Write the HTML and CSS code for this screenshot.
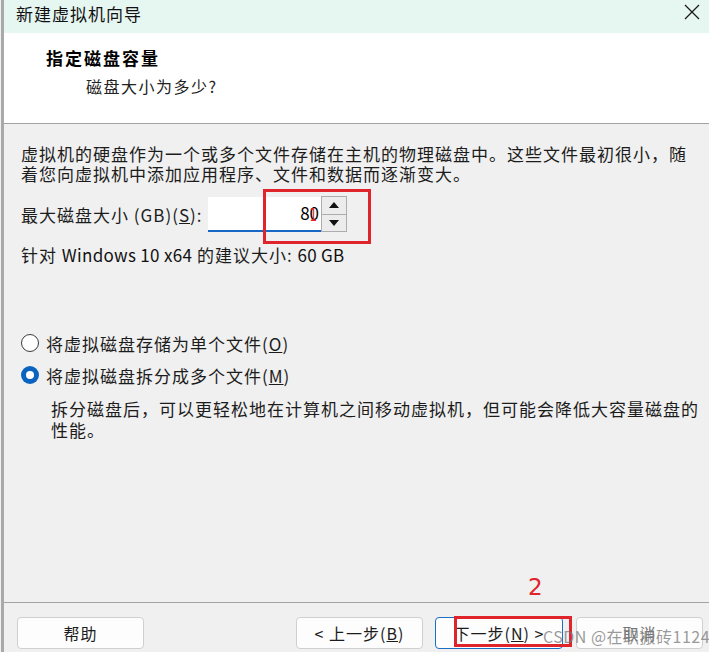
FILE: index.html
```html
<!DOCTYPE html>
<html lang="zh-CN">
<head>
<meta charset="utf-8">
<title>新建虚拟机向导</title>
<link rel="stylesheet" href="styles.css">
</head>
<body>
<div class="window">
  <div class="titlebar">
    <span class="title">新建虚拟机向导</span>
    <svg class="close" width="16" height="16" viewBox="0 0 16 16"><path d="M1 1L15 15M15 1L1 15" stroke="#1a1a1a" stroke-width="1.3" fill="none"/></svg>
  </div>
  <div class="header">
    <div class="h-title">指定磁盘容量</div>
    <div class="h-sub">磁盘大小为多少?</div>
  </div>
  <div class="content">
    <p class="intro">虚拟机的硬盘作为一个或多个文件存储在主机的物理磁盘中。这些文件最初很小，随<br>着您向虚拟机中添加应用程序、文件和数据而逐渐变大。</p>
    <div class="size-row">
      <span class="label">最大磁盘大小 (GB)(<u>S</u>):</span>
      <div class="spin">
        <div class="spin-input">80</div>
        <div class="spin-btns">
          <div class="spin-btn"><svg width="10" height="6" viewBox="0 0 10 6"><path d="M0 6L5 0L10 6Z" fill="#111"/></svg></div>
          <div class="spin-btn"><svg width="10" height="6" viewBox="0 0 10 6"><path d="M0 0L10 0L5 6Z" fill="#111"/></svg></div>
        </div>
      </div>
    </div>
    <p class="recommend">针对 <span class="latin">Windows 10 x64</span> 的建议大小: <span class="latin">60 GB</span></p>
    <div class="options">
      <label class="radio-row"><span class="radio"></span><span>将虚拟磁盘存储为单个文件(<u>O</u>)</span></label>
      <label class="radio-row"><span class="radio checked"></span><span>将虚拟磁盘拆分成多个文件(<u>M</u>)</span></label>
      <p class="desc">拆分磁盘后，可以更轻松地在计算机之间移动虚拟机，但可能会降低大容量磁盘的<br>性能。</p>
    </div>
  </div>
  <div class="footer">
    <button class="btn">帮助</button>
    <div class="spacer"></div>
    <button class="btn">&lt; 上一步(<u>B</u>)</button>
    <button class="btn primary">下一步(<u>N</u>) &gt;</button>
    <button class="btn cancel">取消</button>
  </div>
</div>
<div class="mark mark-1"></div>
<div class="digit digit-1">1</div>
<div class="digit digit-2">2</div>
<div class="mark mark-2"></div>
<div class="watermark">CSDN @在职搬砖1124</div>
</body>
</html>
```
FILE: styles.css
```css
* { box-sizing: border-box; }
html, body {
  margin: 0;
  padding: 0;
  width: 709px;
  height: 652px;
  overflow: hidden;
  background: #f0f0f0;
  font-family: "Noto Sans CJK SC", "Noto Sans", sans-serif;
  color: #1c1c1c;
}
.window {
  position: relative;
  width: 709px;
  height: 652px;
  display: flex;
  flex-direction: column;
  border-left: 3px solid #a9a9a9;
  margin-left: 1px;
}
.titlebar {
  height: 33px;
  background: #e6f6f1;
  display: flex;
  align-items: center;
  justify-content: space-between;
  padding: 0 10px 0 12px;
}
.title {
  font-size: 17px;
  letter-spacing: 1px;
  color: #111;
  margin-top: -6px;
}
.close { margin-top: -9px; }
.header {
  height: 91px;
  background: #fff;
  border-bottom: 1px solid #a3a3a3;
  padding: 13px 0 0 42px;
}
.h-title {
  font-size: 17px;
  font-weight: 700;
  line-height: 24px;
  letter-spacing: 2px;
  color: #000;
}
.h-sub {
  font-size: 16px;
  line-height: 24px;
  margin: 4px 0 0 40px;
  letter-spacing: 1.5px;
  color: #222;
}
.content {
  flex: 1;
  padding: 20px 0 0 17px;
  font-size: 17px;
  letter-spacing: 1px;
}
p { margin: 0; }
.intro { line-height: 20px; }
.size-row {
  display: flex;
  align-items: center;
  height: 36px;
  margin-top: 12px;
}
.label { width: 187px; }
.spin { display: flex; height: 36px; }
.spin-input {
  width: 113px;
  height: 35px;
  margin-top: 1px;
  background: #fff;
  border-bottom: 2px solid #1768c4;
  text-align: right;
  padding-right: 2px;
  line-height: 31px;
  font-size: 17px;
  color: #000;
  letter-spacing: 0;
}
.spin-btns {
  width: 26px;
  display: flex;
  flex-direction: column;
  border: 1px solid #adadad;
  background: #ececec;
}
.spin-btn {
  flex: 1;
  display: flex;
  align-items: center;
  justify-content: center;
}
.spin-btn + .spin-btn { border-top: 1px solid #adadad; }
.recommend { line-height: 20px; margin-top: 13px; }
.latin { letter-spacing: 0.3px; color: #111; }
.options { margin-top: 66px; }
.radio-row {
  display: flex;
  align-items: center;
  height: 24px;
  gap: 7px;
}
.radio-row + .radio-row { margin-top: 8px; }
.radio {
  width: 18px;
  height: 18px;
  border-radius: 50%;
  border: 1px solid #3c3c3c;
  background: #fff;
}
.radio.checked {
  border: none;
  background: #0a64bf;
  position: relative;
}
.radio.checked::after {
  content: "";
  position: absolute;
  left: 5px;
  top: 5px;
  width: 8px;
  height: 8px;
  border-radius: 50%;
  background: #fff;
}
.desc {
  margin: 11px 0 0 30px;
  line-height: 21px;
}
.footer {
  height: 50px;
  border-top: 1px solid #a3a3a3;
  display: flex;
  align-items: flex-start;
  padding: 14px 7px 0 13px;
  gap: 12px;
}
.spacer { flex: 1; }
.btn {
  width: 127px;
  height: 32px;
  background: #fdfdfd;
  border: 1px solid #d0d0d0;
  border-radius: 4px;
  font-family: inherit;
  font-size: 16px;
  letter-spacing: 1px;
  color: #1c1c1c;
  padding: 0;
}
.btn.primary { border-color: #1a6ec4; width: 128px; }
.btn.cancel { color: #777; margin-left: 1px; }
.mark {
  position: absolute;
  border: 3px solid #e0242b;
}
.mark-1 { left: 263px; top: 189px; width: 108px; height: 55px; }
.mark-2 { left: 454px; top: 616px; width: 118px; height: 31px; }
.digit {
  position: absolute;
  color: #e0242b;
  font-family: "DejaVu Sans", sans-serif;
}
.digit-1 { left: 308px; top: 205px; font-size: 17px; transform: scaleX(0.7); }
.digit-2 { left: 528px; top: 574px; font-size: 23px; }
.watermark {
  position: absolute;
  left: 543px;
  top: 624px;
  font-size: 16px;
  color: rgba(120, 120, 120, 0.75);
  white-space: nowrap;
  letter-spacing: 0.5px;
}
```
